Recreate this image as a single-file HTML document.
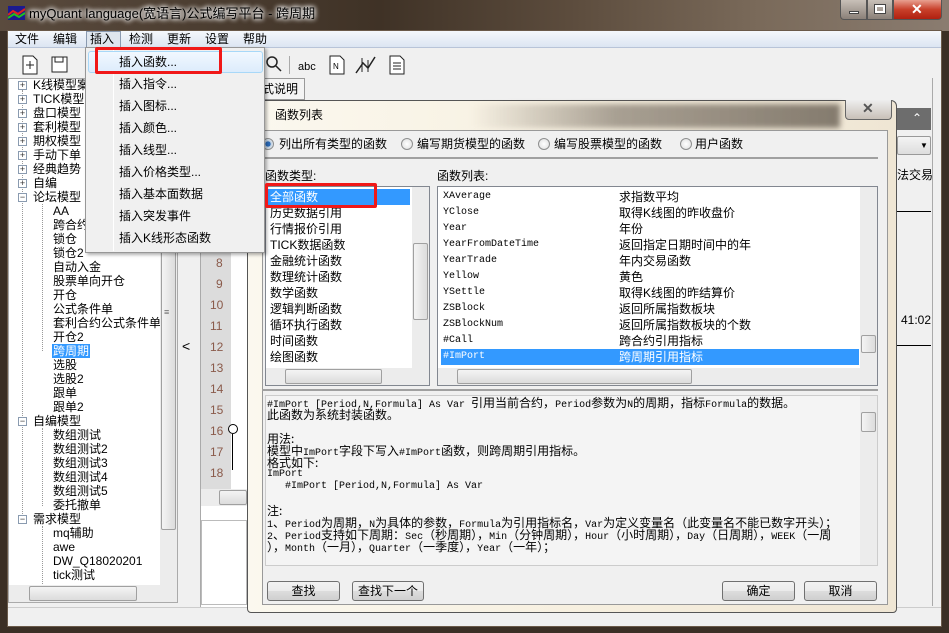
<!DOCTYPE html>
<html><head><meta charset="utf-8">
<style>
*{margin:0;padding:0;box-sizing:border-box}
html{overflow:hidden;width:949px;height:633px}
body{width:949px;height:633px;overflow:hidden;position:relative;background:#3b2f25;font-family:"Liberation Sans","Noto Sans CJK SC",sans-serif;font-size:12px;color:#000}
.a{position:absolute}
.t{position:absolute;white-space:nowrap;line-height:14px}
.m{font-family:"Liberation Mono","Noto Sans CJK SC",monospace;font-size:10px}
.pm{position:absolute;width:9px;height:9px;border:1px solid #8a9bb0;background:#fff;font-size:9px;line-height:7px;text-align:center;color:#333}
.btn{position:absolute;height:20px;border:1px solid #707070;border-radius:3px;background:linear-gradient(#f2f2f2,#ebebeb 50%,#dddddd 51%,#cfcfcf);text-align:center;line-height:18px}
.sb{position:absolute;background:#ececec}
.thumb{position:absolute;border:1px solid #a0a0a0;border-radius:2px;background:linear-gradient(90deg,#f4f4f4,#dcdcdc)}
.thumbh{position:absolute;border:1px solid #a0a0a0;border-radius:2px;background:linear-gradient(#f4f4f4,#dcdcdc)}
.radio{position:absolute;width:12px;height:12px;border:1px solid #8e8f8f;border-radius:50%;background:radial-gradient(#fff,#ddd)}
.d{font-family:"Liberation Mono","Noto Sans CJK SC",monospace;font-size:10px;line-height:12px;white-space:normal}
.d div{height:12px;line-height:12px;overflow:visible;white-space:pre}
.d b{font-weight:normal;font-size:12px;font-family:"Noto Sans CJK SC",sans-serif;line-height:12px}
</style></head><body>
<!-- title bar -->
<div class="a" style="left:0;top:0;width:949px;height:31px;background:linear-gradient(90deg,#5a4b3e,#3f3226 40%,#5c4c3d 60%,#7a6a5a 80%,#8a7c70)"></div>
<div class="a" style="left:8px;top:6px;width:17px;height:14px;background:#1b1b8f"><svg width="17" height="14"><path d="M0 9 L5 5 L10 8 L17 3" stroke="#e02020" stroke-width="2" fill="none"/><path d="M0 12 L6 8 L11 11 L17 7" stroke="#20c020" stroke-width="2" fill="none"/></svg></div>
<div class="t" style="left:29px;top:7px;font-size:13px;color:#000;text-shadow:0 0 6px #fff,0 0 6px #fff,0 0 4px #fff">myQuant language(宽语言)公式编写平台 - 跨周期</div>
<div class="a" style="left:840px;top:0;width:27px;height:20px;border:1px solid #555;border-top:none;border-radius:0 0 0 4px;background:linear-gradient(#c8c0b8,#8a8078)"><div class="a" style="left:8px;top:11px;width:10px;height:3px;background:#fff;border:1px solid #444"></div></div>
<div class="a" style="left:867px;top:0;width:26px;height:20px;border:1px solid #555;border-top:none;background:linear-gradient(#c8c0b8,#8a8078)"><div class="a" style="left:7px;top:5px;width:10px;height:8px;border:2px solid #fff;outline:1px solid #444"></div></div>
<div class="a" style="left:893px;top:0;width:49px;height:20px;border:1px solid #555;border-top:none;border-radius:0 0 4px 0;background:linear-gradient(#e8a090,#c8402a 50%,#b02010)"><div class="t" style="left:17px;top:2px;color:#fff;font-weight:bold;font-size:14px">✕</div></div>
<!-- client -->
<div class="a" style="left:7px;top:30px;width:935px;height:597px;background:#f0f0f0;border:1px solid #6a5a4a"></div>
<!-- menubar -->
<div class="a" style="left:8px;top:31px;width:933px;height:17px;background:linear-gradient(#f5f8fc,#dce5f2);border-bottom:1px solid #b8c4d8"></div>
<div class="a" style="left:86px;top:31px;width:35px;height:17px;border:1px solid #8a9ab0;background:#dfe6ee"></div>
<div class="t" style="left:15px;top:32px">文件</div><div class="t" style="left:53px;top:32px">编辑</div><div class="t" style="left:90px;top:32px">插入</div><div class="t" style="left:129px;top:32px">检测</div><div class="t" style="left:167px;top:32px">更新</div><div class="t" style="left:205px;top:32px">设置</div><div class="t" style="left:243px;top:32px">帮助</div>
<!-- toolbar -->
<div class="a" style="left:8px;top:49px;width:933px;height:28px;background:#f0f0f0"></div>
<svg class="a" style="left:20px;top:55px" width="20" height="20"><path d="M3 1h10l4 4v14H3z" fill="#fff" stroke="#222"/><path d="M10 6v8M6 10h8" stroke="#222"/></svg>
<svg class="a" style="left:50px;top:55px" width="20" height="20"><rect x="2" y="2" width="15" height="15" fill="#fff" stroke="#222"/><rect x="5" y="2" width="8" height="5" fill="none" stroke="#222"/></svg>
<svg class="a" style="left:266px;top:56px" width="16" height="16"><circle cx="6" cy="6" r="5" fill="none" stroke="#222" stroke-width="1.5"/><path d="M10 10l5 5" stroke="#222" stroke-width="1.5"/></svg>
<div class="a" style="left:289px;top:56px;width:1px;height:18px;background:#aaa"></div>
<div class="t" style="left:298px;top:60px;font-size:11px">abc</div>
<svg class="a" style="left:329px;top:55px" width="16" height="20"><path d="M1 1h10l4 4v14H1z" fill="#fff" stroke="#222"/><text x="4" y="14" font-size="8" font-family="Liberation Sans">N</text></svg>
<svg class="a" style="left:355px;top:55px" width="22" height="20"><path d="M1 18L8 8l5 5L20 2" stroke="#222" stroke-width="1.5" fill="none"/><path d="M7 3v14M13 5v12" stroke="#222"/></svg>
<svg class="a" style="left:389px;top:55px" width="16" height="20"><path d="M1 1h10l4 4v14H1z" fill="#fff" stroke="#222"/><path d="M4 8h8M4 11h8M4 14h8" stroke="#222"/></svg>
<!-- left tree -->
<div class="a" style="left:8px;top:78px;width:170px;height:525px;background:#fff;border:1px solid #aaa"></div>
<div class="a" style="left:22px;top:90px;width:0;height:110px;border-left:1px dotted #999"></div>
<div class="a" style="left:42px;top:204px;width:0;height:147px;border-left:1px dotted #999"></div>
<div class="a" style="left:22px;top:200px;width:0;height:322px;border-left:1px dotted #999"></div>
<div class="a" style="left:42px;top:428px;width:0;height:78px;border-left:1px dotted #999"></div>
<div class="a" style="left:42px;top:526px;width:0;height:62px;border-left:1px dotted #999"></div>
<div class="pm" style="left:18px;top:81px">+</div><div class="t" style="left:33px;top:78px">K线模型案</div>
<div class="pm" style="left:18px;top:95px">+</div><div class="t" style="left:33px;top:92px">TICK模型</div>
<div class="pm" style="left:18px;top:109px">+</div><div class="t" style="left:33px;top:106px">盘口模型</div>
<div class="pm" style="left:18px;top:123px">+</div><div class="t" style="left:33px;top:120px">套利模型</div>
<div class="pm" style="left:18px;top:137px">+</div><div class="t" style="left:33px;top:134px">期权模型</div>
<div class="pm" style="left:18px;top:151px">+</div><div class="t" style="left:33px;top:148px">手动下单</div>
<div class="pm" style="left:18px;top:165px">+</div><div class="t" style="left:33px;top:162px">经典趋势</div>
<div class="pm" style="left:18px;top:179px">+</div><div class="t" style="left:33px;top:176px">自编</div>
<div class="pm" style="left:18px;top:193px">−</div><div class="t" style="left:33px;top:190px">论坛模型</div>
<div class="t" style="left:53px;top:204px">AA</div><div class="t" style="left:53px;top:218px">跨合约</div><div class="t" style="left:53px;top:232px">锁仓</div><div class="t" style="left:53px;top:246px">锁仓2</div>
<div class="t" style="left:53px;top:260px">自动入金</div><div class="t" style="left:53px;top:274px">股票单向开仓</div><div class="t" style="left:53px;top:288px">开仓</div><div class="t" style="left:53px;top:302px">公式条件单</div><div class="t" style="left:53px;top:316px">套利合约公式条件单</div><div class="t" style="left:53px;top:330px">开仓2</div>
<div class="t" style="left:52px;top:344px;background:#3399ff;color:#fff;padding:0 1px">跨周期</div>
<div class="t" style="left:53px;top:358px">选股</div><div class="t" style="left:53px;top:372px">选股2</div><div class="t" style="left:53px;top:386px">跟单</div><div class="t" style="left:53px;top:400px">跟单2</div>
<div class="pm" style="left:18px;top:417px">−</div><div class="t" style="left:33px;top:414px">自编模型</div>
<div class="t" style="left:53px;top:428px">数组测试</div><div class="t" style="left:53px;top:442px">数组测试2</div><div class="t" style="left:53px;top:456px">数组测试3</div><div class="t" style="left:53px;top:470px">数组测试4</div><div class="t" style="left:53px;top:484px">数组测试5</div><div class="t" style="left:53px;top:498px">委托撤单</div>
<div class="pm" style="left:18px;top:515px">−</div><div class="t" style="left:33px;top:512px">需求模型</div>
<div class="t" style="left:53px;top:526px">mq辅助</div><div class="t" style="left:53px;top:540px">awe</div><div class="t" style="left:53px;top:554px">DW_Q18020201</div><div class="t" style="left:53px;top:568px">tick测试</div>
<div class="sb" style="left:160px;top:79px;width:17px;height:506px"></div>
<div class="thumb" style="left:161px;top:88px;width:15px;height:442px"></div>
<div class="t" style="left:164px;top:305px;font-size:9px;color:#666">≡</div>
<div class="sb" style="left:9px;top:585px;width:168px;height:17px"></div>
<div class="thumbh" style="left:29px;top:586px;width:108px;height:15px"></div>
<!-- splitter -->
<div class="t" style="left:182px;top:339px;font-size:14px">&lt;</div>
<!-- editor -->
<div class="a" style="left:200px;top:78px;width:48px;height:530px;background:#fff;border:1px solid #aaa"></div>
<div class="a" style="left:201px;top:79px;width:30px;height:410px;background:#dcdcdc"></div>
<div class="a" style="left:228px;top:424px;width:10px;height:10px;border:1px solid #000;border-radius:50%;background:#fff"></div>
<div class="a" style="left:232px;top:434px;width:1px;height:36px;background:#000"></div>
<div class="t" style="left:216px;top:256px;color:#8a5a4a">8</div><div class="t" style="left:216px;top:277px;color:#8a5a4a">9</div><div class="t" style="left:210px;top:298px;color:#8a5a4a">10</div><div class="t" style="left:210px;top:319px;color:#8a5a4a">11</div><div class="t" style="left:210px;top:340px;color:#8a5a4a">12</div><div class="t" style="left:210px;top:361px;color:#8a5a4a">13</div><div class="t" style="left:210px;top:382px;color:#8a5a4a">14</div><div class="t" style="left:210px;top:403px;color:#8a5a4a">15</div><div class="t" style="left:210px;top:424px;color:#8a5a4a">16</div><div class="t" style="left:210px;top:445px;color:#8a5a4a">17</div><div class="t" style="left:210px;top:466px;color:#8a5a4a">18</div>
<div class="sb" style="left:201px;top:489px;width:46px;height:17px"></div>
<div class="thumbh" style="left:219px;top:490px;width:28px;height:15px"></div>
<div class="a" style="left:201px;top:520px;width:46px;height:85px;background:#fff;border:1px solid #bbb"></div>
<div class="a" style="left:260px;top:78px;width:45px;height:22px;border:1px solid #999;background:#f4f4f4"></div>
<div class="t" style="left:262px;top:82px">式说明</div>
<!-- right main -->
<div class="a" style="left:897px;top:108px;width:34px;height:22px;background:#6d6d6d"></div>
<div class="t" style="left:912px;top:111px;color:#fff;font-size:12px">⌃</div>
<div class="a" style="left:897px;top:136px;width:34px;height:19px;border:1px solid #999;border-radius:2px;background:linear-gradient(#f4f4f4,#ddd)"></div>
<div class="t" style="left:920px;top:139px;font-size:8px">▼</div>
<div class="t" style="left:897px;top:168px">法交易</div>
<div class="a" style="left:897px;top:211px;width:34px;height:1px;background:#000"></div>
<div class="t" style="left:901px;top:313px">41:02</div>
<div class="a" style="left:897px;top:345px;width:34px;height:1px;background:#000"></div>
<div class="a" style="left:932px;top:78px;width:9px;height:528px;background:#f0f0f0;border-left:1px solid #aaa"></div>
<!-- status bar -->
<div class="a" style="left:8px;top:607px;width:933px;height:19px;background:#f0f0f0;border-top:1px solid #ccc"></div>
<!-- dialog -->
<div class="a" style="left:247px;top:100px;width:650px;height:513px;border:1px solid #555;border-radius:6px 6px 4px 4px;background:linear-gradient(90deg,#fbf8ef,#f7f0e0 50%,#efe6d4)"></div>
<div class="a" style="left:470px;top:104px;width:370px;height:24px;background:linear-gradient(90deg,rgba(0,0,0,0),rgba(90,80,70,.5) 40%,rgba(60,50,40,.6));filter:blur(3px)"></div>
<div class="t" style="left:275px;top:108px">函数列表</div>
<div class="a" style="left:845px;top:100px;width:47px;height:20px;border:1px solid #666;border-top:none;border-radius:0 0 4px 4px;background:linear-gradient(#eee,#c8c0b8)"><div class="t" style="left:16px;top:1px;font-weight:bold;color:#555;font-size:14px">✕</div></div>
<div class="a" style="left:262px;top:130px;width:626px;height:475px;background:#f0f0f0;border:1px solid #999"></div>
<div class="radio" style="left:262px;top:138px;background:radial-gradient(#2a6ab8 35%,#bcd 40%,#fff)"></div><div class="t" style="left:279px;top:137px">列出所有类型的函数</div>
<div class="radio" style="left:401px;top:138px"></div><div class="t" style="left:417px;top:137px">编写期货模型的函数</div>
<div class="radio" style="left:538px;top:138px"></div><div class="t" style="left:554px;top:137px">编写股票模型的函数</div>
<div class="radio" style="left:680px;top:138px"></div><div class="t" style="left:695px;top:137px">用户函数</div>
<div class="a" style="left:262px;top:157px;width:616px;height:2px;background:#a0a0a0"></div>
<div class="t" style="left:265px;top:169px">函数类型:</div>
<div class="t" style="left:437px;top:169px">函数列表:</div>
<!-- left list -->
<div class="a" style="left:265px;top:186px;width:165px;height:200px;background:#fff;border:1px solid #828790"></div>
<div class="a" style="left:268px;top:189px;width:142px;height:16px;background:#3399ff"></div>
<div class="t" style="left:270px;top:190px;color:#fff">全部函数</div>
<div class="t" style="left:270px;top:206px">历史数据引用</div><div class="t" style="left:270px;top:222px">行情报价引用</div><div class="t" style="left:270px;top:238px">TICK数据函数</div><div class="t" style="left:270px;top:254px">金融统计函数</div><div class="t" style="left:270px;top:270px">数理统计函数</div><div class="t" style="left:270px;top:286px">数学函数</div><div class="t" style="left:270px;top:302px">逻辑判断函数</div><div class="t" style="left:270px;top:318px">循环执行函数</div><div class="t" style="left:270px;top:334px">时间函数</div><div class="t" style="left:270px;top:350px">绘图函数</div>
<div class="sb" style="left:412px;top:187px;width:17px;height:181px"></div>
<div class="thumb" style="left:413px;top:243px;width:15px;height:77px"></div>
<div class="sb" style="left:266px;top:368px;width:163px;height:17px"></div>
<div class="thumbh" style="left:285px;top:369px;width:97px;height:15px"></div>
<!-- right list -->
<div class="a" style="left:437px;top:186px;width:441px;height:200px;background:#fff;border:1px solid #828790"></div>
<div class="a" style="left:441px;top:349px;width:418px;height:16px;background:#3399ff"></div>
<div class="t m" style="left:443px;top:190px">XAverage</div><div class="t" style="left:619px;top:190px">求指数平均</div>
<div class="t m" style="left:443px;top:206px">YClose</div><div class="t" style="left:619px;top:206px">取得K线图的昨收盘价</div>
<div class="t m" style="left:443px;top:222px">Year</div><div class="t" style="left:619px;top:222px">年份</div>
<div class="t m" style="left:443px;top:238px">YearFromDateTime</div><div class="t" style="left:619px;top:238px">返回指定日期时间中的年</div>
<div class="t m" style="left:443px;top:254px">YearTrade</div><div class="t" style="left:619px;top:254px">年内交易函数</div>
<div class="t m" style="left:443px;top:270px">Yellow</div><div class="t" style="left:619px;top:270px">黄色</div>
<div class="t m" style="left:443px;top:286px">YSettle</div><div class="t" style="left:619px;top:286px">取得K线图的昨结算价</div>
<div class="t m" style="left:443px;top:302px">ZSBlock</div><div class="t" style="left:619px;top:302px">返回所属指数板块</div>
<div class="t m" style="left:443px;top:318px">ZSBlockNum</div><div class="t" style="left:619px;top:318px">返回所属指数板块的个数</div>
<div class="t m" style="left:443px;top:334px">#Call</div><div class="t" style="left:619px;top:334px">跨合约引用指标</div>
<div class="t m" style="left:443px;top:350px;color:#fff">#ImPort</div><div class="t" style="left:619px;top:350px;color:#fff">跨周期引用指标</div>
<div class="sb" style="left:860px;top:187px;width:17px;height:181px"></div>
<div class="thumb" style="left:861px;top:335px;width:15px;height:18px"></div>
<div class="sb" style="left:438px;top:368px;width:439px;height:17px"></div>
<div class="thumbh" style="left:457px;top:369px;width:235px;height:15px"></div>
<!-- description -->
<div class="a" style="left:262px;top:389px;width:616px;height:2px;background:#a0a0a0"></div>
<div class="a" style="left:265px;top:395px;width:613px;height:171px;background:#f4f4f4;border:1px solid #ccc"></div>
<div class="a" style="left:860px;top:396px;width:17px;height:169px;background:#ececec"></div>
<div class="thumb" style="left:861px;top:412px;width:15px;height:20px"></div>
<div class="a d" style="left:267px;top:397px"><div>#ImPort [Period,N,Formula] As Var <b>引用当前合约，</b>Period<b>参数为</b>N<b>的周期，指标</b>Formula<b>的数据。</b></div><div><b>此函数为系统封装函数。</b></div><div></div><div><b>用法:</b></div><div><b>模型中</b>ImPort<b>字段下写入</b>#ImPort<b>函数，则跨周期引用指标。</b></div><div><b>格式如下:</b></div><div>ImPort</div><div>   #ImPort [Period,N,Formula] As Var</div><div></div><div><b>注:</b></div><div>1<b>、</b>Period<b>为周期，</b>N<b>为具体的参数，</b>Formula<b>为引用指标名，</b>Var<b>为定义变量名（此变量名不能已数字开头）；</b></div><div>2<b>、</b>Period<b>支持如下周期：</b>Sec<b>（秒周期），</b>Min<b>（分钟周期），</b>Hour<b>（小时周期），</b>Day<b>（日周期），</b>WEEK<b>（一周</b></div><div><b>），</b>Month<b>（一月），</b>Quarter<b>（一季度），</b>Year<b>（一年）；</b></div></div>
<div class="btn" style="left:267px;top:581px;width:73px">查找</div>
<div class="btn" style="left:352px;top:581px;width:72px">查找下一个</div>
<div class="btn" style="left:722px;top:581px;width:73px">确定</div>
<div class="btn" style="left:804px;top:581px;width:73px">取消</div>
<!-- dropdown menu -->
<div class="a" style="left:85px;top:47px;width:180px;height:206px;background:#f0f0f0;border:1px solid #979797;box-shadow:2px 2px 3px rgba(0,0,0,.3)"></div>
<div class="a" style="left:113px;top:49px;width:1px;height:202px;background:#e2e3e3;border-right:1px solid #fff"></div>
<div class="a" style="left:88px;top:51px;width:175px;height:22px;border:1px solid #a8d8f8;border-radius:3px;background:linear-gradient(#f2f8fe,#dcecfc)"></div>
<div class="t" style="left:119px;top:55px">插入函数...</div>
<div class="t" style="left:119px;top:77px">插入指令...</div>
<div class="t" style="left:119px;top:99px">插入图标...</div>
<div class="t" style="left:119px;top:121px">插入颜色...</div>
<div class="t" style="left:119px;top:143px">插入线型...</div>
<div class="t" style="left:119px;top:165px">插入价格类型...</div>
<div class="t" style="left:119px;top:187px">插入基本面数据</div>
<div class="t" style="left:119px;top:209px">插入突发事件</div>
<div class="t" style="left:119px;top:231px">插入K线形态函数</div>
<!-- red boxes -->
<div class="a" style="left:95px;top:47px;width:127px;height:27px;border:3px solid #f01818;border-radius:2px"></div>
<div class="a" style="left:265px;top:183px;width:112px;height:25px;border:3px solid #f01818;border-radius:2px"></div>
</body></html>
